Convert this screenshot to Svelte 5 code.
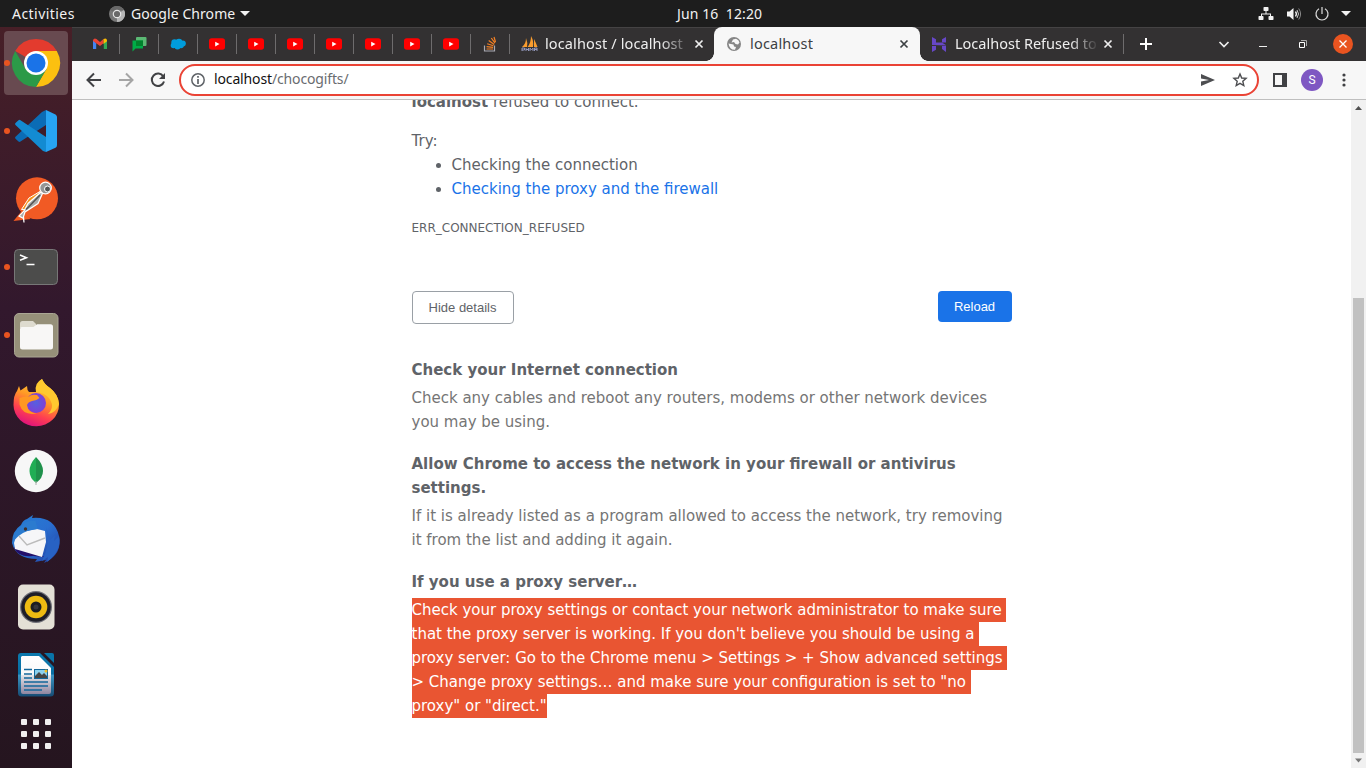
<script>
  const videoTabs = [1, 2, 3, 4, 5, 6, 7];
  const lines = [
    'Check your proxy settings or contact your network administrator to make sure',
    "that the proxy server is working. If you don't believe you should be using a",
    'proxy server: Go to the Chrome menu > Settings > + Show advanced settings',
    '> Change proxy settings… and make sure your configuration is set to "no',
    'proxy" or "direct."'
  ];
</script>

{#snippet cross()}
  <svg class="cross" width="10" height="10" viewBox="0 0 10 10"><path d="M1.5 1.5l7 7M8.500 1.500l-7 7" fill="none" stroke="currentColor" stroke-width="1.7" /></svg>
{/snippet}

<div class="screen">
  <header class="panel">
    <span class="activities">Activities</span>
    <svg class="appicon" width="16" height="16" viewBox="0 0 16 16"><circle cx="8" cy="8" r="8" fill="#777" /><path d="M8 8L1.100 4A8 8 0 0 1 15 4H8z" fill="#686868" /><path d="M8 8L15 4a8 8 0 0 1-7 12z" fill="#b5b5b5" /><circle cx="8" cy="8" r="4.300" fill="#e6e6e6" /><circle cx="8" cy="8" r="3.100" fill="#696969" /></svg>
    <span class="appname">Google Chrome</span>
    <i class="caret"></i>
    <span class="clock">Jun 16&nbsp; 12:20</span>
    <div class="status">
      <svg width="16" height="16" viewBox="0 0 16 16" fill="#f2f2f2"><rect x="5.500" y="1" width="5" height="4" rx=".8" /><rect x=".5" y="10" width="5" height="4" rx=".8" /><rect x="10.500" y="10" width="5" height="4" rx=".8" /><path d="M7.500 5h1v2.500H13V10h-1V8.500H4V10H3V7.500h4.500z" /></svg>
      <svg width="16" height="16" viewBox="0 0 16 16"><path d="M1 5.500h2.500L7.500 2v12L3.500 10.500H1z" fill="#f2f2f2" /><path d="M9.500 5.500q1.800 2.500 0 5" fill="none" stroke="#f2f2f2" stroke-width="1.300" /><path d="M11 4q3 4 0 8" fill="none" stroke="#ccc" stroke-width="1" /><path d="M12.700 2.500q3.800 5.500 0 11" fill="none" stroke="#888" stroke-width="1" /></svg>
      <svg width="16" height="16" viewBox="0 0 16 16" fill="none" stroke="#ddd" stroke-width="1.200"><path d="M5 2.800a6 6 0 1 0 6 0M8 1v7" /></svg>
      <i class="caret"></i>
    </div>
  </header>

  <div class="main">
    <nav class="dock">
      <div class="tile active running"><svg viewBox="0 0 64 64"><path d="M32 32L11.200 20A24 24 0 0 1 52.800 20H32z" fill="#e33b2e" /><path d="M52.800 20A24 24 0 0 1 32 56l10.400-18L32 20z" fill="#fcc010" /><path d="M32 56A24 24 0 0 1 11.200 20L21.600 38 42.400 38z" fill="#2b9a48" /><circle cx="32" cy="32" r="12" fill="#fff" /><circle cx="32" cy="32" r="9.500" fill="#1a73e8" /></svg></div>
      <div class="tile running"><svg viewBox="0 0 64 64"><path d="M42 11v15L16.500 42.500q-1 .8-2 0l-3-2.700q-1-1 0-2L38 13z" fill="#0b6cb5" /><path d="M42 53V38L16.500 21.200q-1-.8-2 0l-3 2.700q-1 1 0 2L39 52z" fill="#138bd2" /><path d="M42 11l9.500 4.500q1.500 1 1.500 2.500v28q0 2-1.500 2.700L42 53z" fill="#27a4f2" /></svg></div>
      <div class="tile"><svg viewBox="0 0 64 64"><circle cx="33" cy="31.300" r="21" fill="#f15a24" /><path d="M9.500 54l9-11 8 9z" fill="#f15a24" /><path d="M36 24.500L25 31l-7.500 11.500 5.500.2L36.500 30z" fill="#f7931e" stroke="#fff" /><path d="M37 25L24 36.500 20 44 15 49l4.500 2.500.5 4-.5-6L21 45l13-8.500 4.500-10z" fill="#aaa" stroke="#fff" stroke-width="1.200" /><path d="M36 28L25 39.500l-3 3" fill="none" stroke="#565656" stroke-width="1.600" /><circle cx="41.500" cy="21" r="5.800" fill="#969696" stroke="#fff" stroke-width="1.200" /><circle cx="43.500" cy="22" r="3" fill="#555" stroke="#fff" /></svg></div>
      <div class="tile running"><svg viewBox="0 0 64 64"><rect x="10.500" y="14.500" width="43" height="35" rx="4" fill="#4c4c4b" stroke="#777" /><path d="M16 20l6.500 2.700-6.500 2.600M22.500 29.500h8" fill="none" stroke="#fff" stroke-width="1.500" /></svg></div>
      <div class="tile running"><svg viewBox="0 0 64 64"><rect x="10.500" y="10.500" width="43.500" height="43.500" rx="4.500" fill="#969079" stroke="#aaa694" /><path d="M16 20.500q0-2.500 2.500-2.500H29l3 3v4H16z" fill="#dedbcf" /><path d="M16 26q0-2 2-2h11.500l3.500-2.800h13.500q2.500 0 2.500 2.500V44q0 2.500-2.500 2.500h-28Q16 46.500 16 44z" fill="#f8f7f6" /></svg></div>
      <div class="tile"><svg viewBox="0 0 64 64">
        <defs><linearGradient id="fx" x1=".8" y1="0" x2=".4" y2="1"><stop offset="0" stop-color="#ffe63e" /><stop offset=".45" stop-color="#ff9a25" /><stop offset=".75" stop-color="#ff4050" /><stop offset="1" stop-color="#e1157a" /></linearGradient><radialGradient id="fp"><stop offset="0" stop-color="#5560e0" /><stop offset="1" stop-color="#7f3fd6" /></radialGradient></defs>
        <path d="M38 8q2 5 8 9 8.500 6.500 9 16.500A22.700 21.500 0 0 1 9.500 34Q9.500 24 13 20l2-5 1.500 4.500L23 15q0 4 2 6h7q0-8 6-13z" fill="url(#fx)" />
        <path d="M32 21q-2-9 6-13 2 5 8 9 8.500 6.500 9 16-3 9-11 10 8-8 0-17-4-4-12-5z" fill="#ffc92f" />
        <circle cx="32" cy="32" r="10" fill="url(#fp)" />
        <path d="M15.500 27q4-2 9.500-1.500Q27 23 33 24l2.500 3Q33 29.500 28 30q-4 1-5 4 1 8 10 8.500-14 2.500-17.500-9z" fill="#ff9822" /></svg></div>
      <div class="tile"><svg viewBox="0 0 64 64"><circle cx="32" cy="32" r="21.200" fill="#f7f7f7" /><path d="M32 18q7 7 7 14t-7 12z" fill="#1f914b" /><path d="M32 18q-6.500 7-6.500 14T32 44z" fill="#21ad55" /><path d="M32 42v4" stroke="#aaa" /></svg></div>
      <div class="tile"><svg viewBox="0 0 64 64">
        <defs><linearGradient id="tb" x1="0" y1="0" x2="1" y2="1"><stop offset="0" stop-color="#257ed2" /><stop offset=".5" stop-color="#2a6fd0" /><stop offset="1" stop-color="#203a9c" /></linearGradient></defs>
        <path d="M23 12l6-4-1 3Q50 9 55 29q4 18-15 27l2-3-11 2 2-3Q12 52 8 36q0-12 9-18 2-5 6-6z" fill="url(#tb)" /><path d="M10 41q5 10 19 8l12 1-30-10z" fill="#24106a" />
        <path d="M13 26l20-4 8 2 1 11-4 15-27-8-1-6z" fill="#f6f6f8" /><path d="M15 29l8 9 18-7" fill="none" stroke="#bbb" stroke-width="1.400" /><path d="M8.500 37q0-12 9-18 5-6 14-5l2 8q-12 1-19 7-4 3-6 8z" fill="#2b7bcf" /><circle cx="21.500" cy="22" r="1.700" fill="#3e302d" /><path d="M42 20q5 16-4 34l6-4-1 5Q58 44 55 29l-5 5 1-6-5 5z" fill="#2862c4" /></svg></div>
      <div class="tile"><svg viewBox="0 0 64 64"><rect x="14" y="9.500" width="36.500" height="45" rx="5" fill="#e4e0d6" /><circle cx="32" cy="32" r="16" fill="#707078" /><circle cx="32" cy="32" r="14.800" fill="#1e1e28" /><circle cx="32" cy="32" r="11.300" fill="#eebb12" /><circle cx="32" cy="32" r="5.500" fill="#1b1d22" /><circle cx="32" cy="32" r="2.500" fill="#34353c" /></svg></div>
      <div class="tile"><svg viewBox="0 0 64 64">
        <defs><linearGradient id="wr" x2="0" y2="1"><stop offset="0" stop-color="#0b79ae" /><stop offset=".49" stop-color="#086ea2" /><stop offset=".5" stop-color="#3a96c4" /><stop offset="1" stop-color="#164b73" /></linearGradient><linearGradient id="wp" x2="0" y2="1"><stop offset="0" stop-color="#fff" /><stop offset=".49" stop-color="#f8f8f8" /><stop offset=".5" stop-color="#e5e5e8" /><stop offset="1" stop-color="#8f85a0" /></linearGradient></defs>
        <path d="M17 10h19l14 14v26q0 3.500-3.500 3.500h-29Q14 53.500 14 50V13q0-3 3-3z" fill="url(#wr)" /><path d="M18 13h17l12 12v24q0 2-2 2H19q-2 0-2-2V14z" fill="url(#wp)" /><path d="M40 10h8q2 0 2 2v8z" fill="#0974a8" />
        <path d="M20 26.500h8M20 31h8M20 35h8M20 39h24M20 43h24M20 47h18" stroke="#13679a" stroke-width="1.700" /><rect x="30.500" y="26.500" width="13" height="9" fill="#8ad0ee" stroke="#13679a" /><path d="M31 35v-2l4-4 3 3 2-2 3 3v2z" fill="#444" /><circle cx="42" cy="28" r="1.500" fill="#f3bb22" /></svg></div>
      <div class="apps">{#each Array(9) as _}<i></i>{/each}</div>
    </nav>

    <div class="browser">
      <div class="tabs">
        <div class="mini"><svg width="16" height="16" viewBox="0 0 16 16"><path d="M1 3.500v9.500h3.200V7.500z" fill="#4285f4" /><path d="M11.800 7.500V13H15V3.500z" fill="#34a853" /><path d="M1 4.200Q2 1.500 4.500 3L8 6l3.500-3v4.300L8 10 1 5z" fill="#ea4335" /><path d="M11.500 3Q14.500 1.500 15 4.200v1L11.500 8z" fill="#fbbc04" /></svg></div>
        <div class="mini"><svg width="16" height="16" viewBox="0 0 16 16"><rect x="5" y="1" width="10.500" height="9" rx="1" fill="#5bb974" /><path d="M1.500 4.500h10.500v8H4.500l-3 3V5.500z" fill="#00ac47" /><path d="M5 4.500h7v5.500H5z" fill="#00832d" /></svg></div>
        <div class="mini"><svg width="16" height="16" viewBox="0 0 16 16" fill="#009ddc"><circle cx="4.500" cy="6.500" r="3.200" /><circle cx="9" cy="6" r="3.300" /><circle cx="12.800" cy="7.600" r="3" /><circle cx="3.500" cy="9.500" r="2.800" /><circle cx="7.500" cy="10.500" r="3" /><circle cx="11" cy="9.500" r="2.800" /></svg></div>
        {#each videoTabs as tab (tab)}
          <div class="mini"><svg width="16" height="16" viewBox="0 0 16 16"><rect y="2.300" width="16" height="11.500" rx="2.800" fill="#f00" /><path d="M6.200 5.700l4.300 2.400-4.300 2.400z" fill="#fff" /></svg></div>
        {/each}
        <div class="mini"><svg width="16" height="16" viewBox="0 0 16 16" fill="none"><path d="M2.500 9.500V15h10V9.500" stroke="#aaaab2" stroke-width="1.200" /><path d="M4.500 13h6.500M4.600 10.700l6.500.7M5.200 7.700l6.200 2M6.700 4.600l5.500 4M9.300 2l3.700 5.200M12 1l1.500 5" stroke="#f48024" stroke-width="1.200" /></svg></div>
        <div class="tab first"><svg width="17" height="16" viewBox="0 0 17 16"><path d="M1 11Q5 8 5 2q2 5 1 9zM6.500 11Q10 7 10 0q3 5 2 11zM13 11V3q2 4 3.500 8z" fill="#f89c2f" /><path d="M1 15v-3h2.500v2H1M5 12v3m0-1.500h2.500V12v3M9 15v-3l1.500 2 1.500-2v3M13.500 15v-3H16v3m0-1.500h-2.500" fill="none" stroke="#9297bb" stroke-width="1" /></svg><span class="title t1">localhost / localhost</span>{@render cross()}</div>
        <div class="tab selected"><svg width="14" height="14" viewBox="0 0 14 14"><circle cx="7" cy="7" r="7" fill="#858585" /><path d="M1.500 6.500l5 1 .5 2 2 .5-1 2.800Q2.500 13 1.500 6.500zM6 2.500l3-.8q3 1 3.500 3.800L11 7.500 8.500 7 7 5 4.500 5.500z" fill="#f7f7f7" /></svg><span class="title t2">localhost</span>{@render cross()}</div>
        <div class="tab third"><svg width="14" height="15" viewBox="0 0 14 15" fill="#6747c7"><path d="M0 0l4 2.200v3.300l5.800.1L14 8H0zM10 2.200V5.500h4V0zM0 9l10-.1V12l4 3V8.500zM0 15V9h4v3.700z" /></svg><span class="title t3">Localhost Refused to</span>{@render cross()}</div>
        <svg class="plus" width="14" height="14" viewBox="0 0 14 14"><path d="M7 1v12M1 7h12" stroke="#fff" stroke-width="2" /></svg>
        <div class="window">
          <svg width="12" height="12" viewBox="0 0 12 12"><path d="M1.500 4L6 8.500 10.500 4" fill="none" stroke="#eee" stroke-width="1.700" /></svg>
          <svg width="8" height="12" viewBox="0 0 8 12"><path d="M0 8.500h8" stroke="#eee" /></svg>
          <svg width="8" height="8" viewBox="0 0 8 8" fill="none"><path d="M2 .5h5.500V6" stroke="#aaa" /><path d="M.5 2.500h5v5h-5z" stroke="#fff" /></svg>
          <svg class="exit" width="20" height="20" viewBox="0 0 20 20"><circle cx="10" cy="10" r="10" fill="#e95420" /><path d="M6.500 6.500l7 7m0-7l-7 7" stroke="#fff" stroke-width="1.300" /></svg>
        </div>
      </div>

      <div class="toolbar">
        <svg width="16" height="16" viewBox="0 0 16 16" fill="none" stroke="#404144" stroke-width="2"><path d="M15 8H2M8 1.500L1.500 8 8 14.500" /></svg>
        <svg width="16" height="16" viewBox="0 0 16 16" fill="none" stroke="#a5a5a5" stroke-width="2"><path d="M1 8h13M8 1.500L14.500 8 8 14.500" /></svg>
        <svg width="16" height="16" viewBox="0 0 16 16"><path d="M13.300 4.500A6.200 6.200 0 1 0 14 9.500" fill="none" stroke="#404144" stroke-width="2" /><path d="M15 1v6H9z" fill="#404144" /></svg>
        <div class="omnibox">
          <svg width="14" height="14" viewBox="0 0 14 14"><circle cx="7" cy="7" r="6.200" fill="none" stroke="#5f6368" stroke-width="1.500" /><path d="M7 3v1.700M7 6v5" stroke="#5f6368" stroke-width="1.700" /></svg>
          <span class="url"><b>localhost</b>/chocogifts/</span>
          <svg width="14" height="12" viewBox="0 0 14 12"><path d="M0 0l14 6L0 12V7.400L8 6 0 4.600z" fill="#4d4e51" /></svg>
          <svg width="16" height="16" viewBox="0 0 16 16"><path d="M8 2l1.700 4 4.400.4-3.300 2.900 1 4.300L8 11.300l-3.800 2.300 1-4.300-3.300-2.900 4.400-.4z" fill="none" stroke="#4d4e51" stroke-width="1.400" /></svg>
        </div>
        <svg width="14" height="14" viewBox="0 0 14 14"><path d="M1 1h12v12H1z" fill="none" stroke="#404144" stroke-width="2" /><path d="M9 1h4v12H9z" fill="#404144" /></svg>
        <span class="avatar">S</span>
        <svg class="more" width="4" height="14" viewBox="0 0 4 14" fill="#404144"><circle cx="2" cy="2" r="1.600" /><circle cx="2" cy="7" r="1.600" /><circle cx="2" cy="12" r="1.600" /></svg>
      </div>

      <div class="viewport">
        <main>
          <p class="summary"><strong>localhost</strong> refused to connect.</p>
          <p class="try">Try:</p>
          <ul><li>Checking the connection</li><li><a href="#details">Checking the proxy and the firewall</a></li></ul>
          <p class="code">ERR_CONNECTION_REFUSED</p>
          <div class="buttons"><button class="hide">Hide details</button><button class="reload">Reload</button></div>
          <section id="details">
            <h2>Check your Internet connection</h2>
            <p>Check any cables and reboot any routers, modems or other network devices you may be using.</p>
            <h2>Allow Chrome to access the network in your firewall or antivirus settings.</h2>
            <p>If it is already listed as a program allowed to access the network, try removing it from the list and adding it again.</p>
            <h2>If you use a proxy server…</h2>
            <div class="marked">{#each lines as line}<span>{line}</span>{/each}</div>
          </section>
        </main>
        <div class="scroll">
          <svg width="15" height="15" viewBox="0 0 15 15"><path d="M4 10h7L7.500 6z" fill="#505050" /></svg>
          <i class="thumb"></i>
          <svg width="15" height="15" viewBox="0 0 15 15"><path d="M4 5.500h7l-3.500 4z" fill="#777" /></svg>
        </div>
      </div>
    </div>
  </div>
</div>

<style>
  :global(body) { margin: 0; overflow: hidden; }
  .screen { width: 1366px; height: 768px; overflow: hidden; display: flex; flex-direction: column; font-family: 'Noto Sans', 'Open Sans', sans-serif; font-size: 14px; }
  svg { display: block; flex: none; }
  .panel { height: 27px; flex: none; box-sizing: border-box; background: #1d1d1d; color: #f2f2f2; display: flex; align-items: center; padding: 0 15px 0 12px; }
  .activities { width: 97px; letter-spacing: .45px; }
  .appicon { margin-right: 6px; }
  .appname { width: 105px; white-space: nowrap; letter-spacing: .07px; }
  .caret { width: 0; height: 0; border: 5px solid transparent; border-top-color: #f2f2f2; border-bottom: 0; margin-left: 4px; }
  .clock { margin-left: 427px; white-space: nowrap; letter-spacing: .1px; }
  .status { margin-left: auto; display: flex; align-items: center; gap: 12px; }
  .status .caret { margin-left: -1px; }
  .main { flex: 1; display: flex; min-height: 0; }
  .dock { width: 72px; flex: none; box-sizing: border-box; padding: 4px; display: flex; flex-direction: column; gap: 4px; background: linear-gradient(#471f27, #32182d 38%, #25151f); }
  .tile { width: 64px; height: 64px; flex: none; position: relative; border-radius: 4px; }
  .tile svg { width: 64px; height: 64px; }
  .active { background: #684a50; }
  .running::before { content: ''; position: absolute; left: 0; top: 29px; width: 6px; height: 6px; border-radius: 3px; background: #e95420; }
  .apps { display: grid; grid-template-columns: repeat(3, 6px); grid-auto-rows: 6px; gap: 6px; padding: 8px 17px; }
  .apps i { background: #f0efef; border-radius: 1px; }
  .browser { flex: 1; min-width: 0; display: flex; flex-direction: column; }
  .tabs { height: 34px; flex: none; box-sizing: border-box; background: #333132; box-shadow: inset 0 1px #454344; display: flex; align-items: center; padding-left: 9px; color: #eee; }
  .mini { width: 39px; height: 20px; flex: none; box-sizing: border-box; display: flex; align-items: center; padding-left: 11px; border-right: 1px solid #6e6c6d; }
  .tab { height: 34px; box-sizing: border-box; flex: none; display: flex; align-items: center; }
  .title { font-size: 14.500px; line-height: 22px; padding-bottom: 2px; white-space: nowrap; overflow: hidden; }
  .cross { margin-left: auto; }
  .first { width: 204px; padding: 0 10px 0 11px; }
  .t1 { margin-left: 7px; width: 142px; letter-spacing: .12px; mask-image: linear-gradient(90deg, #000 115px, transparent 148px); }
  .selected { width: 206px; padding: 0 11px 0 13px; background: #f7f7f7; color: #3c4043; border-radius: 8px 8px 0 0; position: relative; }
  .selected::before, .selected::after { content: ''; position: absolute; bottom: 0; width: 8px; height: 8px; }
  .selected::before { left: -8px; background: radial-gradient(circle at 0 0, transparent 7.500px, #f7f7f7 8px); }
  .selected::after { right: -8px; background: radial-gradient(circle at 100% 0, transparent 7.500px, #f7f7f7 8px); }
  .t2 { margin-left: 9px; letter-spacing: .2px; }
  .third { width: 204px; height: 20px; padding: 0 10px 0 12px; border-right: 1px solid #6e6c6d; }
  .t3 { margin-left: 9px; width: 142px; mask-image: linear-gradient(90deg, #000 115px, transparent 144px); }
  .plus { margin-left: 15px; }
  .window { margin-left: auto; display: flex; align-items: center; padding-right: 13px; }
  .window svg + svg { margin-left: 29px; }
  .window svg:nth-child(3) { margin-left: 32px; }
  .window .exit.exit { margin-left: 26px; }
  .toolbar { height: 39px; flex: none; box-sizing: border-box; background: #f7f7f7; border-bottom: 1px solid #bfbfbf; display: flex; align-items: center; padding: 0 20px 0 14px; }
  .toolbar > svg + svg { margin-left: 16px; }
  .omnibox { width: 1080px; height: 32px; box-sizing: border-box; border: 2px solid #ea4335; border-radius: 16px; background: #fff; display: flex; align-items: center; margin-left: 13px; padding: 0 9px 0 10px; }
  .url { flex: 1; margin-left: 9px; color: #696c70; letter-spacing: -.14px; line-height: 20px; padding-bottom: 2px; }
  .url b { font-weight: 400; color: #111; }
  .omnibox svg:last-child { margin-left: 17px; }
  .omnibox + svg { margin-left: 14px; }
  .avatar { width: 22px; height: 22px; border-radius: 50%; background: #7e57c2; color: #fff; margin-left: 14px; font: 12px/22px Roboto, sans-serif; text-align: center; }
  .more { margin-left: auto; }
  .viewport { flex: 1; min-height: 0; background: #fff; display: flex; overflow: hidden; }
  main { width: 600px; margin: -10px auto 0; color: #5f6368; font: 15px/24px 'DejaVu Sans', sans-serif; }
  p, ul, h2 { margin: 0; }
  .try { margin-top: 15px; }
  ul { padding-left: 40px; }
  a { color: #1a73e8; text-decoration: none; }
  .code { font-size: 12px; line-height: 18px; margin-top: 18px; }
  .buttons { margin-top: 54px; display: flex; justify-content: space-between; align-items: flex-start; }
  button { border-radius: 4px; font: 13px/15px 'Liberation Sans', sans-serif; padding: 8px 16px; box-sizing: border-box; }
  .hide { width: 102px; height: 33px; border: 1px solid #9aa0a6; background: #fff; color: #5f6368; padding: 0; }
  .reload { width: 74px; height: 31px; border: 0; background: #1a73e8; color: #fff; padding: 0; }
  section { margin-top: 34px; }
  h2 { font-size: 15px; line-height: 24px; font-weight: 700; }
  section p { color: #757575; margin: 4px 0 18px; }
  .marked { margin-top: 4px; color: #fff; display: flex; flex-direction: column; align-items: flex-start; }
  .marked span { background: #e95532; white-space: nowrap; padding-right: 4.800px; }
  .marked span:last-child { padding-right: 0; }
  .scroll { width: 15px; flex: none; background: #f1f1f1; display: flex; flex-direction: column; align-items: center; }
  .thumb { width: 11px; height: 455px; background: #c1c1c1; margin-top: auto; }
</style>
